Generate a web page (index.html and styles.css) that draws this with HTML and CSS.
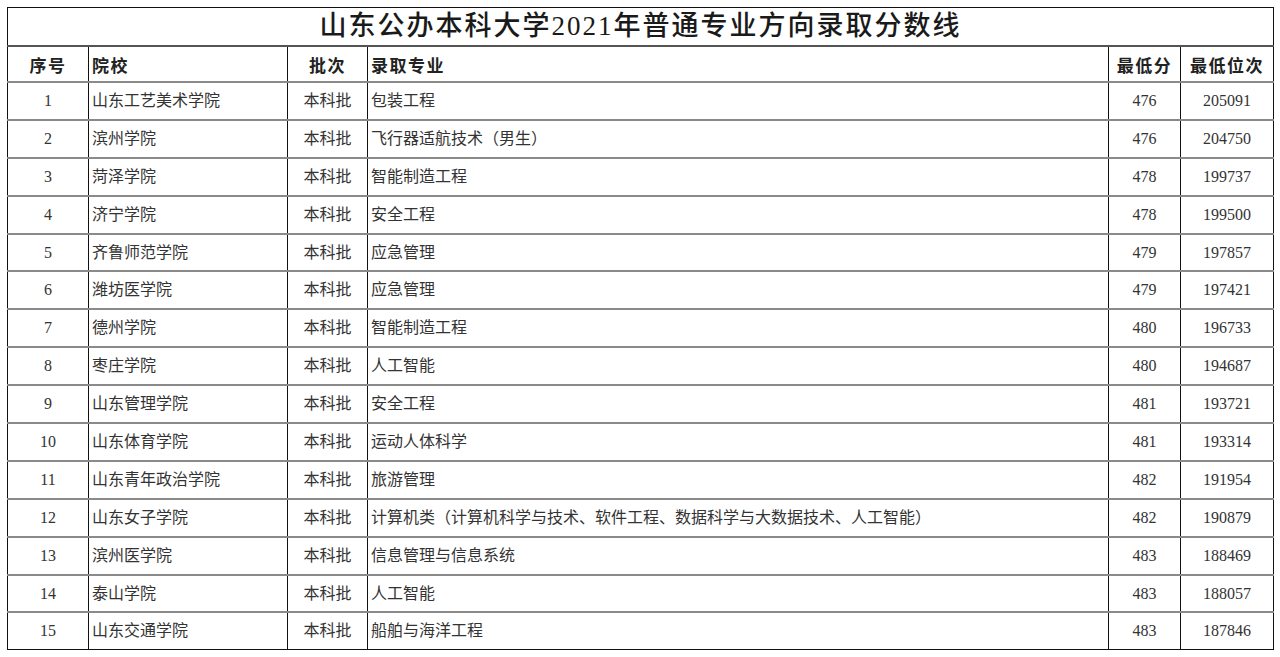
FILE: index.html
```html
<!DOCTYPE html>
<html lang="zh-CN">
<head>
<meta charset="utf-8">
<title>山东公办本科大学2021年普通专业方向录取分数线</title>
<link rel="stylesheet" href="styles.css">
</head>
<body>
<div class="page">
<table class="score-table">
  <colgroup>
    <col class="c-no"><col class="c-school"><col class="c-batch"><col class="c-major"><col class="c-score"><col class="c-rank">
  </colgroup>
  <thead>
    <tr class="title-row"><th colspan="6" class="title">山东公办本科大学2021年普通专业方向录取分数线</th></tr>
    <tr class="head-row">
      <th class="center">序号</th>
      <th class="left">院校</th>
      <th class="center">批次</th>
      <th class="left">录取专业</th>
      <th class="center">最低分</th>
      <th class="center">最低位次</th>
    </tr>
  </thead>
  <tbody>
    <tr><td class="center">1</td><td>山东工艺美术学院</td><td class="center">本科批</td><td>包装工程</td><td class="center">476</td><td class="center">205091</td></tr>
    <tr><td class="center">2</td><td>滨州学院</td><td class="center">本科批</td><td>飞行器适航技术（男生）</td><td class="center">476</td><td class="center">204750</td></tr>
    <tr><td class="center">3</td><td>菏泽学院</td><td class="center">本科批</td><td>智能制造工程</td><td class="center">478</td><td class="center">199737</td></tr>
    <tr><td class="center">4</td><td>济宁学院</td><td class="center">本科批</td><td>安全工程</td><td class="center">478</td><td class="center">199500</td></tr>
    <tr><td class="center">5</td><td>齐鲁师范学院</td><td class="center">本科批</td><td>应急管理</td><td class="center">479</td><td class="center">197857</td></tr>
    <tr><td class="center">6</td><td>潍坊医学院</td><td class="center">本科批</td><td>应急管理</td><td class="center">479</td><td class="center">197421</td></tr>
    <tr><td class="center">7</td><td>德州学院</td><td class="center">本科批</td><td>智能制造工程</td><td class="center">480</td><td class="center">196733</td></tr>
    <tr><td class="center">8</td><td>枣庄学院</td><td class="center">本科批</td><td>人工智能</td><td class="center">480</td><td class="center">194687</td></tr>
    <tr><td class="center">9</td><td>山东管理学院</td><td class="center">本科批</td><td>安全工程</td><td class="center">481</td><td class="center">193721</td></tr>
    <tr><td class="center">10</td><td>山东体育学院</td><td class="center">本科批</td><td>运动人体科学</td><td class="center">481</td><td class="center">193314</td></tr>
    <tr><td class="center">11</td><td>山东青年政治学院</td><td class="center">本科批</td><td>旅游管理</td><td class="center">482</td><td class="center">191954</td></tr>
    <tr><td class="center">12</td><td>山东女子学院</td><td class="center">本科批</td><td>计算机类（计算机科学与技术、软件工程、数据科学与大数据技术、人工智能）</td><td class="center">482</td><td class="center">190879</td></tr>
    <tr><td class="center">13</td><td>滨州医学院</td><td class="center">本科批</td><td>信息管理与信息系统</td><td class="center">483</td><td class="center">188469</td></tr>
    <tr><td class="center">14</td><td>泰山学院</td><td class="center">本科批</td><td>人工智能</td><td class="center">483</td><td class="center">188057</td></tr>
    <tr><td class="center">15</td><td>山东交通学院</td><td class="center">本科批</td><td>船舶与海洋工程</td><td class="center">483</td><td class="center">187846</td></tr>
  </tbody>
</table>
</div>
</body>
</html>
```

FILE: styles.css
```css
html, body {
  margin: 0;
  padding: 0;
  background: #ffffff;
}

.page {
  padding: 7px 7px 0 7px;
}

.score-table {
  width: 1266px;
  border-collapse: collapse;
  table-layout: fixed;
  font-family: "Liberation Serif", "Noto Sans CJK SC", serif;
  color: #333333;
}

.c-no { width: 81px; }
.c-school { width: 199px; }
.c-batch { width: 80px; }
.c-major { width: 741px; }
.c-score { width: 72px; }
.c-rank { width: 93px; }

.score-table th,
.score-table td {
  border-left: 1.5px solid #111111;
  border-right: 1.5px solid #111111;
  border-top: 2px solid #8a8a8a;
  border-bottom: 2px solid #8a8a8a;
  padding: 0 3px;
  white-space: nowrap;
  overflow: hidden;
  vertical-align: middle;
}

.title-row th.title {
  height: 37px;
  border: 1.5px solid #111111;
  border-bottom: 2px solid #555555;
  font-family: "Liberation Serif", "Noto Sans CJK SC", serif;
  font-size: 27px;
  font-weight: 500;
  letter-spacing: 2px;
  line-height: 1;
  color: #1a1a1a;
  text-align: center;
  padding: 0;
}

.head-row th {
  height: 34px;
  font-family: "Noto Sans CJK SC", sans-serif;
  font-size: 17px;
  font-weight: 700;
  letter-spacing: 1.5px;
  line-height: 1;
  color: #222222;
}

.score-table tbody td {
  height: 35.9px;
  font-size: 16px;
  line-height: 1;
}

.score-table tbody tr:last-child td {
  border-bottom: 1.5px solid #111111;
}

.center { text-align: center; }
.left { text-align: left; }
.score-table td { text-align: left; }
.score-table td.center { text-align: center; }
```
